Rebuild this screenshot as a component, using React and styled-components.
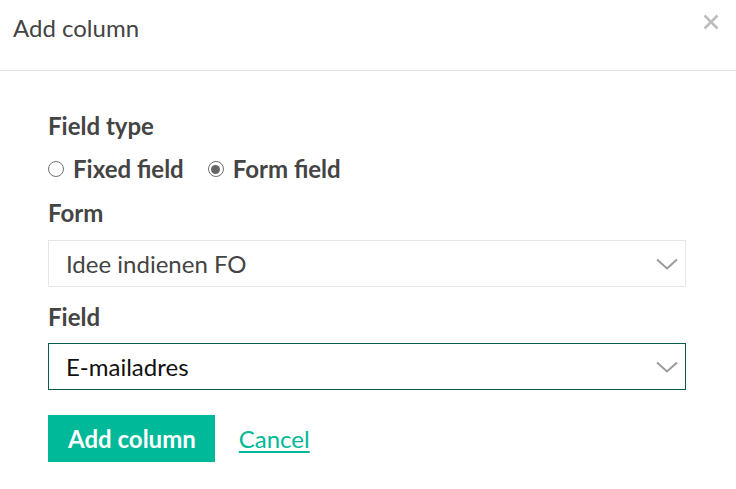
import { useState } from "react";
import styled, { createGlobalStyle } from "styled-components";

const GlobalStyle = createGlobalStyle`
  html, body {
    margin: 0;
    padding: 0;
    background: #fff;
    font-family: Lato, "Open Sans", sans-serif;
  }
`;

const Chevron = () => (
  <svg width="22" height="12" viewBox="0 0 22 12" fill="none">
    <path d="M1 1.5 L11 10.5 L21 1.5" stroke="#9a9a9a" strokeWidth="2" />
  </svg>
);

const App = () => {
  const [fieldType, setFieldType] = useState("form");

  return (
    <>
      <GlobalStyle />
      <Dialog>
        <Header>
          <Title>Add column</Title>
          <CloseButton aria-label="Close">
            <svg width="16" height="16" viewBox="0 0 16 16">
              <path d="M1.5 1.5 L14.5 14.5 M14.5 1.5 L1.5 14.5" stroke="#bdbdbd" strokeWidth="2.6" />
            </svg>
          </CloseButton>
        </Header>
        <Body>
          <Label>Field type</Label>
          <RadioRow>
            <RadioOption onClick={() => setFieldType("fixed")}>
              <RadioDot $checked={fieldType === "fixed"} />
              Fixed field
            </RadioOption>
            <RadioOption onClick={() => setFieldType("form")}>
              <RadioDot $checked={fieldType === "form"} />
              Form field
            </RadioOption>
          </RadioRow>

          <Label $top="16px" $bottom="13px">Form</Label>
          <Select>
            <span>Idee indienen FO</span>
            <Chevron />
          </Select>

          <Label $top="16px" $bottom="12px">Field</Label>
          <Select $focused>
            <span>E-mailadres</span>
            <Chevron />
          </Select>

          <Actions>
            <PrimaryButton>Add column</PrimaryButton>
            <CancelLink href="#">Cancel</CancelLink>
          </Actions>
        </Body>
      </Dialog>
    </>
  );
};

const Dialog = styled.div`
  width: 736px;
  height: 489px;
  background: #fff;
`;

const Header = styled.header`
  height: 71px;
  border-bottom: 1px solid #e4e4e4;
  display: flex;
  align-items: flex-start;
  justify-content: space-between;
  padding: 0 0 0 13px;
  box-sizing: border-box;
`;

const Title = styled.h1`
  margin: 14px 0 0 0;
  font-size: 24px;
  line-height: 28px;
  font-weight: 400;
  color: #444;
`;

const CloseButton = styled.button`
  border: none;
  background: none;
  padding: 0;
  margin: 14px 17px 0 0;
  width: 16px;
  height: 16px;
  cursor: pointer;
  display: flex;
`;

const Body = styled.div`
  padding: 41px 50px 0 48px;
`;

const Label = styled.div`
  font-size: 24px;
  font-weight: 700;
  color: #444;
  line-height: 28px;
  margin-top: ${(p) => p.$top || "0"};
  margin-bottom: ${(p) => p.$bottom || "0"};
`;

const RadioRow = styled.div`
  display: flex;
  gap: 24px;
  margin-top: 15px;
`;

const RadioOption = styled.label`
  display: flex;
  align-items: center;
  gap: 9px;
  font-size: 24px;
  font-weight: 700;
  color: #444;
  line-height: 28px;
  cursor: pointer;
`;

const RadioDot = styled.span`
  flex-shrink: 0;
  width: 14px;
  height: 14px;
  border: 1.5px solid #707070;
  border-radius: 50%;
  box-sizing: content-box;
  display: flex;
  align-items: center;
  justify-content: center;
  &::after {
    content: "";
    width: 9px;
    height: 9px;
    border-radius: 50%;
    background: #666;
    display: ${(p) => (p.$checked ? "block" : "none")};
  }
`;

const Select = styled.div`
  height: 47px;
  box-sizing: border-box;
  border: 1px solid ${(p) => (p.$focused ? "#0b5a4a" : "#e6e6e6")};
  display: flex;
  align-items: center;
  justify-content: space-between;
  padding: 0 7px 0 17px;
  font-size: 24px;
  color: ${(p) => (p.$focused ? "#111" : "#444")};
  cursor: pointer;
`;

const Actions = styled.div`
  display: flex;
  align-items: center;
  gap: 24px;
  margin-top: 25px;
`;

const PrimaryButton = styled.button`
  background: #00b999;
  color: #fff;
  border: none;
  height: 47px;
  padding: 0 19px 0 20px;
  font-family: Lato, sans-serif;
  font-size: 24px;
  font-weight: 700;
  cursor: pointer;
`;

const CancelLink = styled.a`
  color: #00b999;
  font-size: 24px;
  font-weight: 400;
  text-decoration: underline;
  text-underline-offset: 3px;
`;

export default App;
